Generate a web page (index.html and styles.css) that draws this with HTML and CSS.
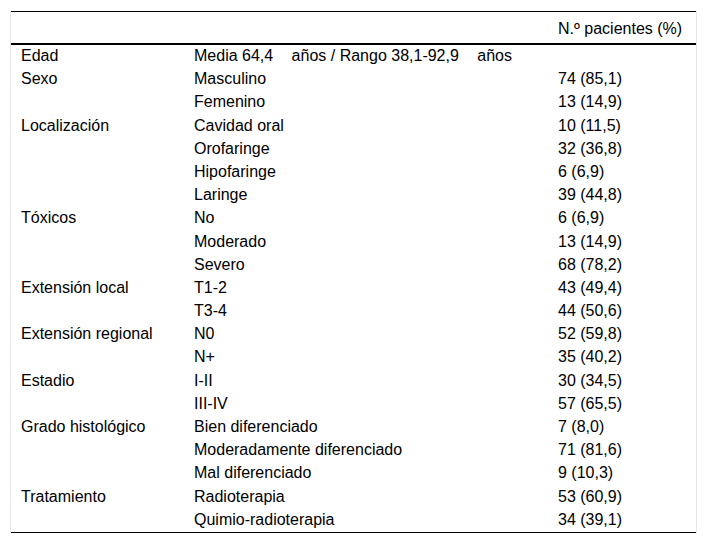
FILE: index.html
```html
<!DOCTYPE html>
<html lang="es">
<head>
<meta charset="utf-8">
<title>Características de los pacientes</title>
<link rel="stylesheet" href="styles.css">
</head>
<body>
<div class="wrap">
<table class="data">
<colgroup><col class="c1"><col class="c2"><col class="c3"></colgroup>
<thead>
<tr><th></th><th></th><th>N.º pacientes (%)</th></tr>
</thead>
<tbody>
<tr><td>Edad</td><td>Media 64,4 <span class="gap"></span>años / Rango 38,1-92,9 <span class="gap"></span>años</td><td></td></tr>
<tr><td>Sexo</td><td>Masculino</td><td>74 (85,1)</td></tr>
<tr><td></td><td>Femenino</td><td>13 (14,9)</td></tr>
<tr><td>Localización</td><td>Cavidad oral</td><td>10 (11,5)</td></tr>
<tr><td></td><td>Orofaringe</td><td>32 (36,8)</td></tr>
<tr><td></td><td>Hipofaringe</td><td>6 (6,9)</td></tr>
<tr><td></td><td>Laringe</td><td>39 (44,8)</td></tr>
<tr><td>Tóxicos</td><td>No</td><td>6 (6,9)</td></tr>
<tr><td></td><td>Moderado</td><td>13 (14,9)</td></tr>
<tr><td></td><td>Severo</td><td>68 (78,2)</td></tr>
<tr><td>Extensión local</td><td>T1-2</td><td>43 (49,4)</td></tr>
<tr><td></td><td>T3-4</td><td>44 (50,6)</td></tr>
<tr><td>Extensión regional</td><td>N0</td><td>52 (59,8)</td></tr>
<tr><td></td><td>N+</td><td>35 (40,2)</td></tr>
<tr><td>Estadio</td><td>I-II</td><td>30 (34,5)</td></tr>
<tr><td></td><td>III-IV</td><td>57 (65,5)</td></tr>
<tr><td>Grado histológico</td><td>Bien diferenciado</td><td>7 (8,0)</td></tr>
<tr><td></td><td>Moderadamente diferenciado</td><td>71 (81,6)</td></tr>
<tr><td></td><td>Mal diferenciado</td><td>9 (10,3)</td></tr>
<tr><td>Tratamiento</td><td>Radioterapia</td><td>53 (60,9)</td></tr>
<tr><td></td><td>Quimio-radioterapia</td><td>34 (39,1)</td></tr>
</tbody>
</table>
</div>
</body>
</html>
```
FILE: styles.css
```css
html, body {
  margin: 0;
  padding: 0;
  background: #fff;
}
body {
  font-family: "Liberation Sans", Arial, sans-serif;
  font-size: 16px;
  color: #000;
}
.wrap {
  margin: 11px 0 0 10px;
  width: 687px;
  box-sizing: border-box;
  border-left: 1px solid #e6e6e6;
  border-right: 1px solid #e6e6e6;
}
.data {
  width: 100%;
  table-layout: fixed;
  border-collapse: separate;
  border-spacing: 0;
  border-top: 1px solid #000;
  border-bottom: 1px solid #000;
}
.c1 { width: 173px; }
.c2 { width: 364px; }
.c3 { width: auto; }
.data th {
  font-weight: normal;
  text-align: left;
  padding: 7px 10px 5px;
  line-height: 19px;
  border-bottom: 2px solid #000;
  white-space: nowrap;
}
.data td {
  padding: 1px 10px 3.19px;
  line-height: 19px;
  vertical-align: top;
  white-space: nowrap;
}
.gap {
  display: inline-block;
  width: 14px;
}
```
